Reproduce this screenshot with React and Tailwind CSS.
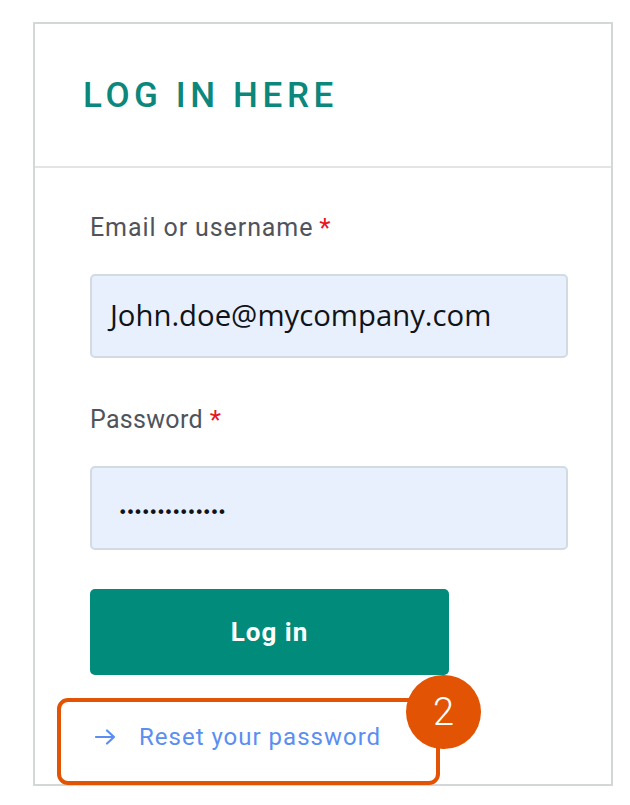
export default function App() {
  return (
    <div className="relative w-[630px] h-[805px] bg-white overflow-hidden" style={{ fontFamily: "Roboto, 'Noto Sans', sans-serif" }}>
      <div className="ml-[33px] mt-[22px] w-[580px] h-[764px] border-2 border-[#d4d7d7] flex flex-col">
        <div className="h-[144px] shrink-0 flex items-center pl-[48px] border-b-2 border-[#e4e4e4]">
          <h1 className="text-[35px] leading-none font-medium tracking-[4.6px] text-[#0b877b]">LOG IN HERE</h1>
        </div>
        <div className="flex flex-col pl-[55px]">
          <label className="mt-[45px] h-[30px] leading-[30px] text-[25px] text-[#4f545c] flex items-center tracking-[0.9px]">
            Email or username<span className="text-[#e8141e] ml-[6px] text-[26px]">*</span>
          </label>
          <div className="mt-[31px] w-[478px] h-[84px] rounded-[5px] border-2 border-[#d2dae4] bg-[#e8f0fe] flex items-center pl-[18px]">
            <span className="text-[29.3px] text-[#101418]" style={{ fontFamily: "'Open Sans', sans-serif" }}>John.doe@mycompany.com</span>
          </div>
          <label className="mt-[47px] h-[30px] leading-[30px] text-[25px] text-[#4f545c] flex items-center tracking-[0.3px]">
            Password<span className="text-[#e8141e] ml-[7px] text-[26px]">*</span>
          </label>
          <div className="mt-[31px] w-[478px] h-[84px] rounded-[5px] border-2 border-[#d2dae4] bg-[#e8f0fe] flex items-center pl-[26px]">
            <span className="mt-[10px] text-[16px] leading-none text-[#101418] tracking-[-1.8px]" style={{ fontFamily: "'DejaVu Sans', sans-serif" }}>••••••••••••••</span>
          </div>
          <button className="mt-[39px] w-[359px] h-[86px] rounded-[5px] bg-[#008b7b] text-white text-[26px] font-bold tracking-[1px] flex items-center justify-center">
            Log in
          </button>
          <a className="mt-[47px] h-[30px] leading-[30px] flex items-center text-[24px] text-[#5b8ef2] pl-[4px]">
            <svg width="22" height="16" viewBox="0 0 22 16" fill="none" stroke="#5b8ef2" strokeWidth="2.2" strokeLinecap="round" strokeLinejoin="round">
              <path d="M2 8h18M13 1.5l7 6.5-7 6.5" />
            </svg>
            <span className="ml-[23px] tracking-[1px]">Reset your password</span>
          </a>
        </div>
      </div>
      <div className="absolute left-[57px] top-[698px] w-[383px] h-[87px] border-4 border-[#e25303] rounded-[11px]"></div>
      <div className="absolute left-[406px] top-[675px] w-[75px] h-[74px] rounded-full bg-[#e25303] flex items-center justify-center">
        <span className="text-white text-[38px] leading-none font-light">2</span>
      </div>
    </div>
  );
}
